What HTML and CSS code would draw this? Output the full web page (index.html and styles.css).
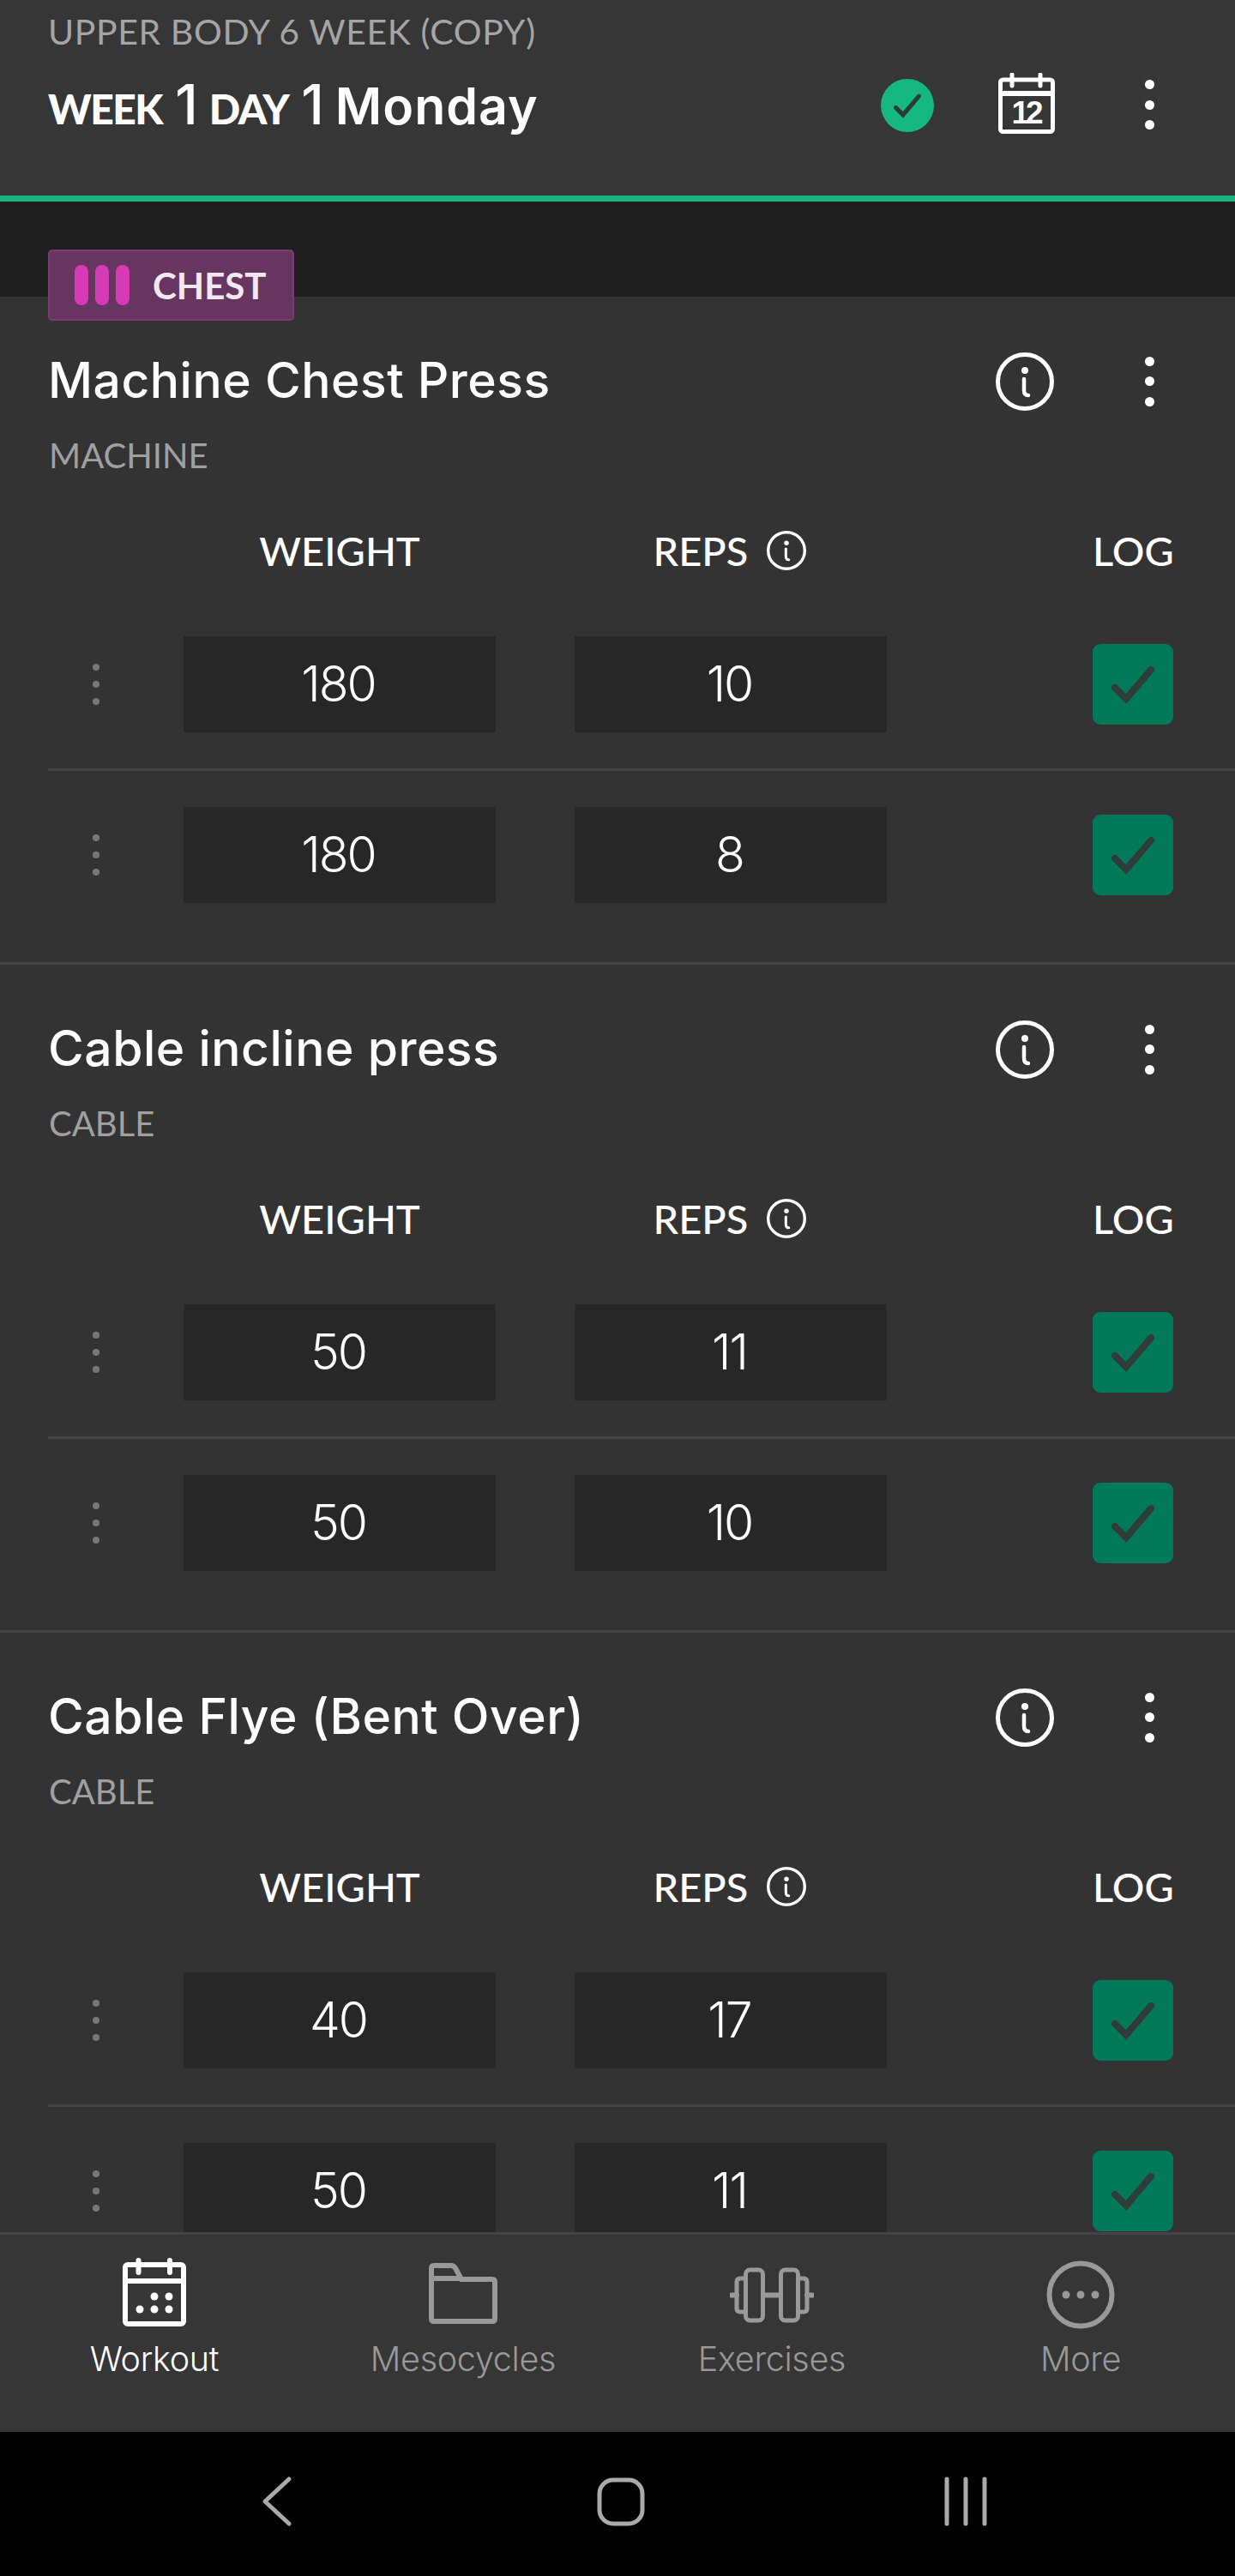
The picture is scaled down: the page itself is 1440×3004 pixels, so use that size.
FILE: index.html

```html
<!DOCTYPE html>
<html lang="en">
<head>
<meta charset="utf-8"/>
<title>Workout</title>
<link rel="stylesheet" href="styles.css">
</head>
<body>
<svg class="defs" width="0" height="0">
  <symbol id="info" viewBox="0 0 68 68">
    <circle cx="34" cy="34" r="31.5" fill="none" stroke="currentColor" stroke-width="5"/>
    <circle cx="34" cy="21" r="4" fill="currentColor"/>
    <path d="M33 31v13q0 6 5 6" fill="none" stroke="currentColor" stroke-width="4.5" stroke-linecap="round"/>
  </symbol>
  <symbol id="check" viewBox="0 0 50 50">
    <path d="M4 29l13 13L46 8" fill="none" stroke="currentColor" stroke-width="8" stroke-linecap="round" stroke-linejoin="miter"/>
  </symbol>
</svg>

<div class="app">
  <header class="top">
    <div class="top-text">
      <div class="meso">UPPER BODY 6 WEEK (COPY)</div>
      <div class="day">
        <span class="cap">WEEK</span>
        <span class="num">1</span>
        <span class="cap">DAY</span>
        <span class="num">1</span>
        <span>Monday</span>
      </div>
    </div>
    <div class="done">
      <svg width="32" height="32"><use href="#check"/></svg>
    </div>
    <svg class="cal" width="66" height="71" viewBox="0 0 66 71">
      <rect x="2.5" y="8" width="61" height="60.5" rx="3" fill="none" stroke="#fff" stroke-width="5"/>
      <path d="M0 24h66" stroke="#fff" stroke-width="6"/>
      <path d="M16 2v13M49 2v13" stroke="#fff" stroke-width="5" stroke-linecap="round"/>
      <text x="32" y="59" class="cal-date">12</text>
    </svg>
    <div class="kebab"><i></i><i></i><i></i></div>
  </header>

  <div class="band">
    <div class="tag">
      <span class="bar"></span><span class="bar"></span><span class="bar"></span>
      <span class="tag-name">CHEST</span>
    </div>
  </div>

  <main class="list">
    <section class="exercise">
      <div class="ex-head">
        <h2>Machine Chest Press</h2>
        <svg class="info-big" width="68" height="68"><use href="#info"/></svg>
        <div class="kebab"><i></i><i></i><i></i></div>
      </div>
      <div class="kind">MACHINE</div>
      <div class="cols">
        <span class="col-weight">WEIGHT</span>
        <span class="col-reps">REPS <svg width="46" height="46"><use href="#info"/></svg></span>
        <span class="col-log">LOG</span>
      </div>
      <div class="set">
        <div class="grip"><i></i><i></i><i></i></div>
        <div class="field weight">180</div>
        <div class="field">10</div>
        <div class="log"><svg width="50" height="50"><use href="#check"/></svg></div>
      </div>
      <div class="set">
        <div class="grip"><i></i><i></i><i></i></div>
        <div class="field weight">180</div>
        <div class="field">8</div>
        <div class="log"><svg width="50" height="50"><use href="#check"/></svg></div>
      </div>
    </section>

    <section class="exercise">
      <div class="ex-head">
        <h2>Cable incline press</h2>
        <svg class="info-big" width="68" height="68"><use href="#info"/></svg>
        <div class="kebab"><i></i><i></i><i></i></div>
      </div>
      <div class="kind">CABLE</div>
      <div class="cols">
        <span class="col-weight">WEIGHT</span>
        <span class="col-reps">REPS <svg width="46" height="46"><use href="#info"/></svg></span>
        <span class="col-log">LOG</span>
      </div>
      <div class="set">
        <div class="grip"><i></i><i></i><i></i></div>
        <div class="field weight">50</div>
        <div class="field">11</div>
        <div class="log"><svg width="50" height="50"><use href="#check"/></svg></div>
      </div>
      <div class="set">
        <div class="grip"><i></i><i></i><i></i></div>
        <div class="field weight">50</div>
        <div class="field">10</div>
        <div class="log"><svg width="50" height="50"><use href="#check"/></svg></div>
      </div>
    </section>

    <section class="exercise">
      <div class="ex-head">
        <h2>Cable Flye (Bent Over)</h2>
        <svg class="info-big" width="68" height="68"><use href="#info"/></svg>
        <div class="kebab"><i></i><i></i><i></i></div>
      </div>
      <div class="kind">CABLE</div>
      <div class="cols">
        <span class="col-weight">WEIGHT</span>
        <span class="col-reps">REPS <svg width="46" height="46"><use href="#info"/></svg></span>
        <span class="col-log">LOG</span>
      </div>
      <div class="set">
        <div class="grip"><i></i><i></i><i></i></div>
        <div class="field weight">40</div>
        <div class="field">17</div>
        <div class="log"><svg width="50" height="50"><use href="#check"/></svg></div>
      </div>
      <div class="set">
        <div class="grip"><i></i><i></i><i></i></div>
        <div class="field weight">50</div>
        <div class="field">11</div>
        <div class="log"><svg width="50" height="50"><use href="#check"/></svg></div>
      </div>
    </section>
  </main>

  <nav class="tabs">
    <div class="tab active">
      <svg width="74" height="84" viewBox="0 0 74 84">
        <rect x="3" y="8" width="68" height="69" rx="3" fill="none" stroke="#fff" stroke-width="6"/>
        <path d="M0 27h74" stroke="#fff" stroke-width="6"/>
        <path d="M18.5 3v14M55 3v14" stroke="#fff" stroke-width="6" stroke-linecap="round"/>
        <circle cx="37" cy="45" r="4.5" fill="#fff"/><circle cx="54" cy="45" r="4.5" fill="#fff"/>
        <circle cx="20" cy="60" r="4.5" fill="#fff"/><circle cx="37" cy="60" r="4.5" fill="#fff"/><circle cx="54" cy="60" r="4.5" fill="#fff"/>
      </svg>
      <span>Workout</span>
    </div>
    <div class="tab">
      <svg width="80" height="84" viewBox="0 0 80 84">
        <path d="M3 27V12q0-3 3-3h20q3 0 5 3l7 13h36q3 0 3 3v43q0 3-3 3H6q-3 0-3-3z" fill="none" stroke="#999" stroke-width="6"/>
        <path d="M3 24h33" stroke="#999" stroke-width="6"/>
      </svg>
      <span>Mesocycles</span>
    </div>
    <div class="tab">
      <svg width="98" height="84" viewBox="0 0 98 84">
        <rect x="18.5" y="14" width="20" height="59" rx="5" fill="none" stroke="#999" stroke-width="5"/>
        <rect x="59.5" y="14" width="20" height="59" rx="5" fill="none" stroke="#999" stroke-width="5"/>
        <path d="M18 24H12q-4 0-4 4v31q0 4 4 4h6M80 24h6q4 0 4 4v31q0 4-4 4h-6" fill="none" stroke="#999" stroke-width="5"/>
        <path d="M2 43.5h6M39 43.5h20M90 43.5h6" stroke="#999" stroke-width="6" stroke-linecap="round"/>
      </svg>
      <span>Exercises</span>
    </div>
    <div class="tab">
      <svg width="80" height="84" viewBox="0 0 80 84">
        <circle cx="40" cy="43" r="36.5" fill="none" stroke="#999" stroke-width="6"/>
        <circle cx="23" cy="43" r="4.5" fill="#999"/><circle cx="40" cy="43" r="4.5" fill="#999"/><circle cx="57" cy="43" r="4.5" fill="#999"/>
      </svg>
      <span>More</span>
    </div>
  </nav>

  <footer class="sysbar">
    <svg width="60" height="60" viewBox="0 0 60 60"><path d="M45 4L17 30l28 26" fill="none" stroke="#aaa" stroke-width="5" stroke-linecap="round" stroke-linejoin="round"/></svg>
    <svg width="60" height="60" viewBox="0 0 60 60"><rect x="5" y="5" width="50" height="51" rx="16" fill="none" stroke="#aaa" stroke-width="5"/></svg>
    <svg width="60" height="60" viewBox="0 0 60 60"><path d="M8 4v52M30 4v52M52 4v52" stroke="#aaa" stroke-width="5" stroke-linecap="round"/></svg>
  </footer>
</div>
</body>
</html>
```

FILE: styles.css

```css
html, body {
    margin: 0;
    background: #000;
}
.defs {
    position: absolute;
}
.app {
    width: 1440px;
    height: 3004px;
    display: flex;
    flex-direction: column;
    overflow: hidden;
    font-family: Inter, "Noto Sans", sans-serif;
    color: #fff;
    background: #333;
}

/* header */
.top {
    flex: none;
    height: 228px;
    display: flex;
    align-items: flex-start;
    padding: 0 90px 0 56px;
    background: #363636;
    border-bottom: 7px solid #16b47f;
}
.top-text {
    flex: 1;
}
.meso {
    margin-top: 14px;
    height: 46px;
    line-height: 46px;
    font-family: Lato, sans-serif;
    font-size: 41px;
    letter-spacing: 0.6px;
    color: #a5a5a5;
}
.day {
    margin-top: 32px;
    height: 60px;
    line-height: 60px;
    display: flex;
    align-items: baseline;
    gap: 15px;
    font-size: 59px;
    font-weight: 600;
    letter-spacing: 1px;
    white-space: nowrap;
}
.day .cap {
    font-family: Lato, sans-serif;
    font-weight: 900;
    font-size: 48px;
    letter-spacing: -1.5px;
}
.day .num {
    font-weight: 500;
    font-size: 64px;
    letter-spacing: -2px;
}
.done {
    width: 62px;
    height: 62px;
    margin-top: 92px;
    border-radius: 50%;
    background: #14b880;
    color: #2b3b35;
    display: flex;
    align-items: center;
    justify-content: center;
}
.cal {
    margin: 85px 0 0 75px;
}
.cal-date {
    font-family: "Liberation Sans", sans-serif;
    font-weight: 700;
    font-size: 37px;
    letter-spacing: -4px;
    fill: #fff;
    text-anchor: middle;
}
.kebab {
    width: 20px;
    display: flex;
    flex-direction: column;
    align-items: center;
    gap: 12.5px;
}
.kebab i {
    width: 11px;
    height: 11px;
    border-radius: 50%;
    background: #fff;
}
.top .kebab {
    margin: 93px 0 0 100px;
}

/* muscle group band */
.band {
    flex: none;
    height: 111px;
    box-sizing: border-box;
    padding: 56px 0 0 56px;
    background: #1e1e1e;
}
.tag {
    position: relative;
    z-index: 1;
    width: 287px;
    height: 83px;
    box-sizing: border-box;
    display: flex;
    align-items: center;
    padding-left: 29px;
    gap: 8px;
    background: #663560;
    border: 2px solid #7b3c73;
    border-radius: 5px;
}
.bar {
    width: 16px;
    height: 47px;
    border-radius: 8px;
    background: #d63bb5;
}
.tag-name {
    margin-left: 19px;
    font-family: Lato, sans-serif;
    font-weight: 700;
    font-size: 42px;
    color: #f2e8f1;
}

/* exercises */
.list {
    flex: 1;
    min-height: 0;
    overflow: hidden;
    background: #333;
}
.exercise {
    padding: 63px 0 27px;
    border-bottom: 3px solid #444;
}
.ex-head {
    display: flex;
    align-items: center;
    height: 68px;
    padding: 0 90px 0 56px;
}
.ex-head h2 {
    flex: 1;
    margin: 0;
    font-size: 57px;
    font-weight: 500;
    letter-spacing: 0.5px;
    white-space: nowrap;
}
.ex-head .kebab, .info-big {
    margin-top: 3px;
}
.kind {
    margin: 31px 0 0 57px;
    height: 46px;
    line-height: 46px;
    font-family: Lato, sans-serif;
    font-size: 40px;
    color: #a0a0a0;
}
.info-big {
    flex: none;
    margin-right: 101px;
}
.cols {
    display: flex;
    align-items: center;
    height: 50px;
    margin: 63px 0 33px;
    padding-left: 214px;
    font-family: Lato, sans-serif;
    font-size: 47px;
    font-weight: 500;
}
.col-weight {
    width: 364px;
    text-align: center;
    margin-right: 92px;
}
.col-reps {
    width: 364px;
    box-sizing: border-box;
    padding-right: 2px;
    display: flex;
    align-items: center;
    justify-content: center;
    gap: 22px;
}
.col-log {
    margin-left: auto;
    width: 94px;
    margin-right: 72px;
    text-align: center;
}
.set {
    display: flex;
    align-items: center;
    height: 112px;
    margin-left: 56px;
    padding: 42px 72px 42px 0;
    border-bottom: 3px solid #444;
}
.set:last-child {
    border-bottom: 0;
}
.grip {
    width: 112px;
    margin-right: 46px;
    display: flex;
    flex-direction: column;
    align-items: center;
    gap: 12px;
}
.grip i {
    width: 8px;
    height: 8px;
    border-radius: 50%;
    background: #777;
}
.field {
    width: 364px;
    height: 112px;
    box-sizing: border-box;
    padding-right: 3px;
    line-height: 112px;
    text-align: center;
    background: #272727;
    font-size: 57px;
    font-weight: 300;
    letter-spacing: -2px;
}
.field.weight {
    margin-right: 92px;
}
.log {
    width: 94px;
    height: 94px;
    margin-left: auto;
    border-radius: 9px;
    background: #027a5a;
    color: #2e3d38;
    display: flex;
    align-items: center;
    justify-content: center;
}

/* bottom tabs */
.tabs {
    flex: none;
    height: 230px;
    display: grid;
    grid-template-columns: repeat(4, 360px);
    background: #363636;
    border-top: 3px solid #444;
}
.tab {
    display: flex;
    flex-direction: column;
    align-items: center;
    padding-top: 27px;
    font-size: 39.5px;
    font-weight: 300;
    letter-spacing: -0.3px;
    color: #999;
}
.tab span {
    margin-top: 11px;
    line-height: 46px;
}
.tab.active {
    color: #fff;
}

/* android buttons */
.sysbar {
    flex: none;
    height: 168px;
    box-sizing: border-box;
    display: flex;
    justify-content: center;
    gap: 342px;
    padding: 51px 0 0 8px;
    background: #000;
}
```
